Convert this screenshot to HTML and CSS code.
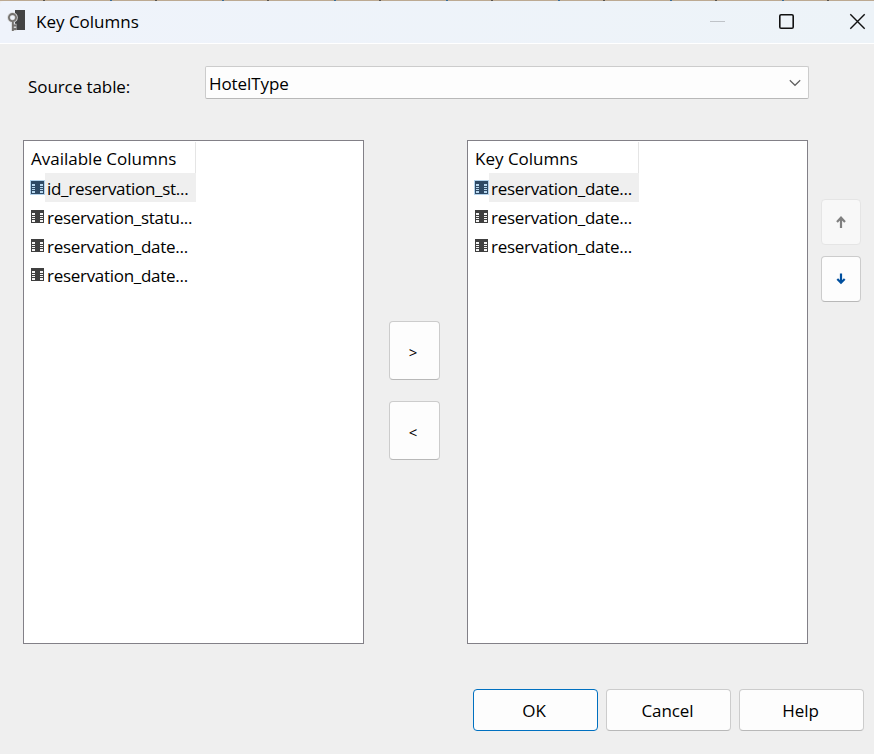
FILE: index.html
```
<!DOCTYPE html>
<html lang="en">
<head>
<meta charset="utf-8">
<title>Key Columns</title>
<link rel="stylesheet" href="styles.css">
</head>
<body>
<svg class="defs" aria-hidden="true">
  <symbol id="column" viewBox="0 0 13 13">
    <path d="M0 0h13v13H0z" fill="currentColor"/>
    <path d="M1 3h3v2H1zM1 6h3v1H1zM1 8h3v1H1zM1 10h3v2H1zM9 3h3v2H9zM9 6h3v1H9zM9 8h3v1H9zM9 10h3v2H9z" fill="var(--cell)"/>
  </symbol>
</svg>
<div class="backdrop"></div>
<div class="dialog">
  <header class="titlebar">
    <svg class="app-icon" width="20" height="24" viewBox="0 0 20 24">
      <path d="M8 1h10v20H8z" fill="#444"/>
      <path d="M5.500 5a3.600 3.600 0 1 1 0 7.200a3.600 3.600 0 0 1 0-7.200M5.900 12v10M6 16.500h3.500M6 20h3.500" fill="none" stroke="#d5d6d8" stroke-width="3.400"/>
      <path d="M5.500 5a3.600 3.600 0 1 1 0 7.200a3.600 3.600 0 0 1 0-7.200M5.900 12v10M6 16.500h3.500M6 20h3.500" fill="none" stroke="#74716e" stroke-width="1.800"/>
    </svg>
    <span class="title">Key Columns</span>
    <svg class="controls" width="164" height="42" viewBox="0 0 164 42" fill="none">
      <path d="M0 20.500h15" stroke="#bfc3c8"/>
      <rect x="69.800" y="13.800" width="13.400" height="13.400" rx="1.300" stroke="#111" stroke-width="1.600"/>
      <path d="M140.300 13.300l14.400 14.400M154.700 13.300l-14.400 14.400" stroke="#111" stroke-width="1.400"/>
    </svg>
  </header>
  <div class="source">
    <label class="source-label">Source table:</label>
    <div class="combo"><span>HotelType</span>
      <svg width="12" height="8" viewBox="0 0 12 8"><path d="M.8 1.200L6 6.300l5.200-5.100" fill="none" stroke="#606060" stroke-width="1.200"/></svg>
    </div>
  </div>
  <main class="picker">
    <section class="list">
      <div class="head">Available Columns</div>
      <div class="row selected"><svg class="glyph"><use href="#column"/></svg><span>id_reservation_st...</span></div>
      <div class="row"><svg class="glyph"><use href="#column"/></svg><span>reservation_statu...</span></div>
      <div class="row"><svg class="glyph"><use href="#column"/></svg><span>reservation_date...</span></div>
      <div class="row"><svg class="glyph"><use href="#column"/></svg><span>reservation_date...</span></div>
    </section>
    <div class="transfer">
      <button class="btn move">&gt;</button>
      <button class="btn move">&lt;</button>
    </div>
    <section class="list keys">
      <div class="head">Key Columns</div>
      <div class="row selected"><svg class="glyph"><use href="#column"/></svg><span>reservation_date...</span></div>
      <div class="row"><svg class="glyph"><use href="#column"/></svg><span>reservation_date...</span></div>
      <div class="row"><svg class="glyph"><use href="#column"/></svg><span>reservation_date...</span></div>
    </section>
    <div class="order">
      <button class="btn arrow off"><svg width="10" height="13" viewBox="0 0 10 13"><path d="M5 12V1.500M1 6L5 1.700l4 4.300" fill="none" stroke="#808080" stroke-width="2.200"/></svg></button>
      <button class="btn arrow"><svg width="10" height="13" viewBox="0 0 10 13"><path d="M5 .5v9.500M1.300 6L5 9.700 8.700 6" fill="none" stroke="#004f9e" stroke-width="2.200"/></svg></button>
    </div>
  </main>
  <footer class="actions">
    <button class="btn primary">OK</button>
    <button class="btn">Cancel</button>
    <button class="btn">Help</button>
  </footer>
</div>
</body>
</html>
```
FILE: styles.css
```
* { box-sizing: border-box; }
body {
  margin: 0;
  width: 874px;
  height: 754px;
  overflow: hidden;
  background: #efefef;
  color: #000;
  font: 17px/29px "Open Sans", "Noto Sans", sans-serif;
  white-space: nowrap;
}
svg { display: block; flex: none; }
.defs { position: absolute; width: 0; height: 0; }
.backdrop {
  height: 1px;
  background: repeating-linear-gradient(90deg, #bca992 0 43px, #59544d 43px 45px, #bca992 45px 110px, #386b96 110px 112px);
}
.dialog { height: 753px; display: flex; flex-direction: column; }
.titlebar {
  height: 43px;
  flex: none;
  display: flex;
  background: linear-gradient(90deg, #eff3fb, #edf3f8);
  border-bottom: 1px solid #fff;
  border-top-left-radius: 4px;
}
.app-icon { margin: 8px 0 0 7px; }
.title { margin: 6px 0 0 9px; }
.controls { margin-left: auto; }
.source { display: flex; padding: 22px 0 0 28px; height: 96px; flex: none; }
.source-label { width: 177px; padding-top: 6px; letter-spacing: -.08px; }
.combo {
  width: 604px;
  height: 33px;
  display: flex;
  align-items: center;
  justify-content: space-between;
  padding: 1px 7px 0 3px;
  letter-spacing: -.08px;
  background: #fdfdfd;
  border: 1px solid #ccc;
  border-bottom-color: #b8b8b8;
  border-radius: 2px;
}
.picker { display: flex; height: 504px; flex: none; padding-left: 23px; }
.list { width: 341px; background: #fff; border: 1px solid #828087; padding-top: 1px; }
.head { width: 172px; height: 31px; padding: 2px 0 0 7px; border-right: 1px solid #e5e5e5; }
.row { display: flex; height: 29px; width: 172px; padding-left: 7px; }
.keys .head, .keys .row { width: 171px; }
.row span { flex: 1; padding: 1px 0 0 2px; margin-left: 1px; letter-spacing: -.29px; line-height: 28px; }
.row span { line-height: 29px; height: 29px; }
.selected span { background: #efefef; }
.glyph { width: 13px; height: 13px; margin-top: 8px; color: #3f3f3f; --cell: #f4f4f4; }
.selected .glyph { color: #2d4965; --cell: #b8d8f0; outline: 1px solid #b4d3ec; }
.transfer { width: 103px; padding: 181px 0 0 25px; display: flex; flex-direction: column; gap: 21px; }
.btn {
  width: 125px;
  height: 42px;
  padding: 0 2px 0 0;
  display: flex;
  align-items: center;
  justify-content: center;
  font: inherit;
  letter-spacing: -.1px;
  color: #000;
  background: #fdfdfd;
  border: 1px solid #ccc;
  border-bottom-color: #b8b8b8;
  border-radius: 4px;
}
.move { width: 51px; height: 59px; font-size: 15px; padding: 3px 3px 0 0; }
.order { padding: 59px 0 0 13px; display: flex; flex-direction: column; gap: 11px; }
.arrow { width: 40px; height: 46px; padding: 0; }
.off { background: #f8f8f8; border-color: #e5e5e5; }
.actions { display: flex; gap: 8px; padding: 45px 0 0 473px; }
.primary { border-color: #0070c0; padding-right: 3px; }
```
